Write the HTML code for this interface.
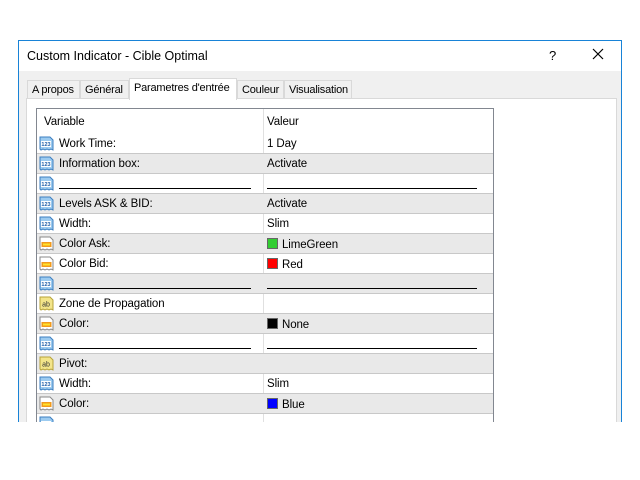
<!DOCTYPE html>
<html><head><style>
*{margin:0;padding:0;box-sizing:border-box}
body{width:640px;height:480px;background:#fff;position:relative;overflow:hidden;font-family:"Liberation Sans",Arial,sans-serif;font-size:11.5px;color:#000}
.win{position:absolute;left:18px;top:40px;width:604px;height:382px;border:1px solid #1883d7;border-bottom:none;background:#f0f0f0;overflow:hidden}
.title{position:absolute;left:0;top:0;width:602px;height:30px;background:#fff;font-size:12.5px}
.title span{position:absolute;left:8px;top:8px}
.q{position:absolute;left:530px;top:7px;font-size:13px}
.x{position:absolute;left:572px;top:6px}
.tab{position:absolute;top:39px;height:19px;border:1px solid #d9d9d9;border-bottom:none;background:#f0f0f0;padding:3px 0 0 4px;font-size:11px;white-space:nowrap;overflow:hidden;letter-spacing:-0.2px}
.tab.a{top:37px;height:22px;background:#fff;z-index:2;padding-top:3px}
.panel{position:absolute;left:7px;top:57px;width:591px;height:340px;background:#fff;border:1px solid #d9d9d9}
.tbl{position:absolute;left:17px;top:67px;width:458px;height:330px;border:1px solid #828790;border-bottom:none;background:#fff;overflow:hidden}
.row{position:absolute;left:0;width:456px;height:20px;border-bottom:1px solid #c8c8c8}
.g{background:#e9e9e9}
.c1{position:absolute;left:22px;top:4px;white-space:nowrap;letter-spacing:-0.1px}
.c2{position:absolute;left:230px;top:4px;white-space:nowrap;letter-spacing:-0.1px}
.sep{position:absolute;left:226px;top:0;width:1px;height:330px;background:#e0e0e0}
.ic{position:absolute;left:2px;top:2px;width:15px;height:15px}
.ln1{position:absolute;left:22px;top:14px;width:192px;height:1px;background:#000}
.ln2{position:absolute;left:230px;top:14px;width:210px;height:1px;background:#000}
.sw{display:inline-block;width:11px;height:11px;vertical-align:-1px;margin-right:4px;border:1px solid #666}
</style></head><body>
<div class="win">
<div class="title"><span>Custom Indicator - Cible Optimal</span><div class="q">?</div>
<svg class="x" width="14" height="14" viewBox="0 0 14 14"><path d="M2 2L12 12M12 2L2 12" stroke="#000" stroke-width="1.2"/></svg></div>
<div class="tab" style="left:8px;width:53px">A propos</div>
<div class="tab" style="left:61px;width:49px">Général</div>
<div class="tab a" style="left:110px;width:108px">Parametres d'entrée</div>
<div class="tab" style="left:218px;width:47px">Couleur</div>
<div class="tab" style="left:265px;width:68px">Visualisation</div>
<div class="panel"></div>
<div class="tbl">
<div class="sep"></div>
<div class="row" style="top:0;height:25px;border:none"><span class="c1" style="left:7px;top:7px">Variable</span><span class="c2" style="top:7px">Valeur</span></div>
<div id="rows"></div>
</div>
</div>
<script>
var R=[["n","Work Time:","1 Day"],["n","Information box:","Activate"],["n","_","_"],["n","Levels ASK &amp; BID:","Activate"],["n","Width:","Slim"],["c","Color Ask:","#32cd32|LimeGreen"],["c","Color Bid:","#ff0000|Red"],["n","_","_"],["s","Zone de Propagation",""],["c","Color:","#000000|None"],["n","_","_"],["s","Pivot:",""],["n","Width:","Slim"],["c","Color:","#0000ff|Blue"],["n","",""]];
var icons={n:'<svg class="ic" viewBox="0 0 15 15"><path d="M1 1h10l3 3v10l-2-1-2 1-2-1-2 1-2-1-2 1-1-1z" fill="#9ccbf0" stroke="#3d7fc0"/><rect x="2" y="5" width="10" height="6" fill="#fff"/><text x="7" y="10" font-size="5.5" text-anchor="middle" fill="#1f5fa8" font-family="Liberation Sans" font-weight="bold">123</text></svg>',
c:'<svg class="ic" viewBox="0 0 15 15"><path d="M1 1h10l3 3v10l-2-1-2 1-2-1-2 1-2-1-2 1-1-1z" fill="#fff" stroke="#888"/><rect x="2.5" y="6" width="10" height="5" fill="#f29a1c"/><rect x="4" y="7.5" width="7" height="2" fill="#ffe22a"/></svg>',
s:'<svg class="ic" viewBox="0 0 15 15"><path d="M1 1h10l3 3v10l-2-1-2 1-2-1-2 1-2-1-2 1-1-1z" fill="#f3e58a" stroke="#b7a33a"/><text x="7" y="10.5" font-size="7" text-anchor="middle" fill="#333" font-family="Liberation Sans">ab</text></svg>'};
var h='';
for(var i=0;i<R.length;i++){var r=R[i];var t=25+i*20;
h+='<div class="row'+(i%2?' g':'')+'" style="top:'+t+'px">'+icons[r[0]];
if(r[1]=="_")h+='<div class="ln1"></div><div class="ln2"></div>';
else{h+='<span class="c1">'+r[1]+'</span>';
if(r[0]=="c"){var p=r[2].split("|");h+='<span class="c2"><span class="sw" style="background:'+p[0]+'"></span>'+p[1]+'</span>';}
else h+='<span class="c2">'+r[2]+'</span>';}
h+='</div>';}
document.getElementById('rows').outerHTML=h;
</script>
</body></html>
